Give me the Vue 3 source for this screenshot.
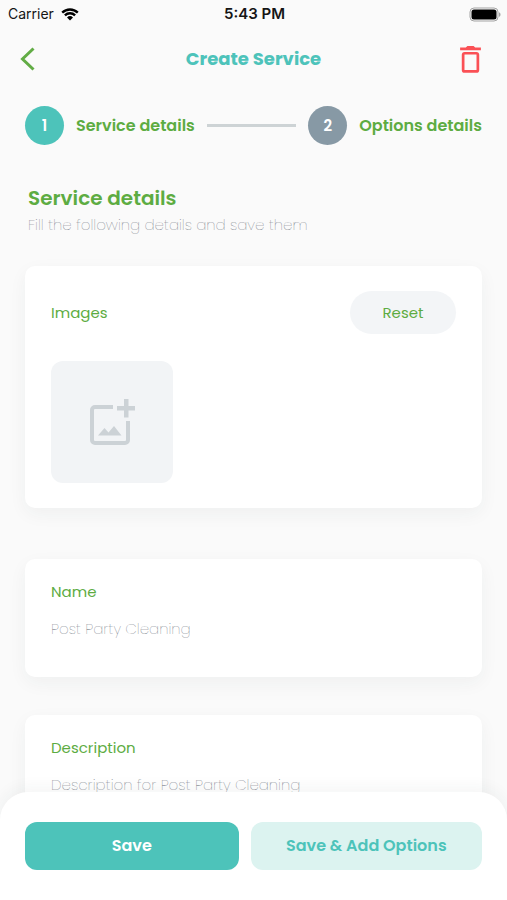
<script setup>
import { ref } from 'vue'

const steps = ['Service details', 'Options details']
const current = ref(0)
const name = ref('Post Party Cleaning')
const description = ref('Description for Post Party Cleaning')
</script>

<template>
  <div class="screen">
    <div class="status">
      <div class="carrier">
        <span>Carrier</span>
        <svg class="wifi" viewBox="0 0 18 13" aria-hidden="true">
          <path d="M1.2 4.6a11.2 11.2 0 0 1 15.6 0" />
          <path d="M3.9 7.4a7.3 7.3 0 0 1 10.2 0" />
          <path class="dot" d="M9 12.6 6 9.5a4.3 4.3 0 0 1 6 0z" />
        </svg>
      </div>
      <span class="time">5:43 PM</span>
      <svg class="battery" viewBox="0 0 32 15" aria-hidden="true">
        <rect class="shell" x="1" y="1" width="28" height="13" rx="4" />
        <rect x="2.5" y="2.5" width="25" height="10" rx="2.5" />
        <path class="tip" d="M30 5.2c2 .8 2 3.8 0 4.6z" />
      </svg>
    </div>

    <header class="topbar">
      <button class="icon-btn" type="button" aria-label="Back">
        <svg class="back" viewBox="0 0 16 24" aria-hidden="true">
          <path d="M13.5 1.5 2.5 12l11 10.5" />
        </svg>
      </button>
      <h1>Create Service</h1>
      <button class="icon-btn end" type="button" aria-label="Delete">
        <svg class="trash" viewBox="0 0 20 26" aria-hidden="true">
          <path class="lid" d="M0 1.4h5.5L7 0h6l1.500 1.400H20V4H0z" />
          <rect x="2.9" y="7" width="14.2" height="17.5" rx="1.5" />
        </svg>
      </button>
    </header>

    <main>
      <ol class="steps">
        <template v-for="(step, i) in steps" :key="step">
          <li v-if="i > 0" class="line" aria-hidden="true"></li>
          <li class="step">
            <span class="num" :class="{ active: i === current }">{{ i + 1 }}</span>
            <span>{{ step }}</span>
          </li>
        </template>
      </ol>

      <section class="intro">
        <h2>Service details</h2>
        <p>Fill the following details and save them</p>
      </section>

      <section class="card images">
        <div class="card-head">
          <h3>Images</h3>
          <button class="reset" type="button">Reset</button>
        </div>
        <button class="tile" type="button" aria-label="Add image">
          <svg viewBox="0 0 46 46" aria-hidden="true">
            <path class="frame" d="M24 8H6a3 3 0 0 0-3 3v30a3 3 0 0 0 3 3h30a3 3 0 0 0 3-3V22" />
            <path d="M9 36.500 15.500 29l4 4.500L25 27l7.500 9.500z" />
            <path d="M35 0h4.500v7H46v4.500h-6.500v7H35v-7h-7V7h7z" />
          </svg>
        </button>
      </section>

      <section class="card field">
        <label for="name">Name</label>
        <input id="name" v-model="name" type="text" />
      </section>

      <section class="card field">
        <label for="description">Description</label>
        <textarea id="description" v-model="description" rows="3"></textarea>
      </section>
    </main>

    <footer>
      <button class="save" type="button">Save</button>
      <button class="save-add" type="button">Save &amp; Add Options</button>
    </footer>
  </div>
</template>

<style>
body {
  margin: 0;
  background: #fafafa;
}
</style>

<style scoped>
.screen {
  height: 100vh;
  display: flex;
  flex-direction: column;
  background: #fafafa;
  color: #5dac42;
  font-family: Poppins, Inter, "Liberation Sans", sans-serif;
  font-size: 15px;
  line-height: 24px;
}
.screen * {
  box-sizing: border-box;
}
button,
input,
textarea {
  font: inherit;
  border: 0;
  padding: 0;
  margin: 0;
  background: none;
}
button {
  cursor: pointer;
}
h1,
h2,
h3,
p,
ol {
  margin: 0;
  padding: 0;
}
.status {
  display: grid;
  grid-template-columns: 1fr auto 1fr;
  align-items: center;
  height: 28px;
  padding: 0 6px 0 8px;
  color: #151515;
  font-family: Inter, sans-serif;
  font-size: 14px;
}
.carrier {
  display: flex;
  align-items: center;
  gap: 7px;
}
.time {
  font-size: 15px;
  font-weight: 600;
}
.wifi {
  width: 18px;
  height: 13px;
  fill: none;
  stroke: #000;
  stroke-width: 2.4;
}
.wifi .dot {
  fill: #000;
  stroke: none;
}
.battery {
  width: 32px;
  height: 15px;
  justify-self: end;
}
.battery .shell {
  fill: none;
  stroke: #a3a3a3;
}
.battery .tip {
  fill: #a3a3a3;
}
.topbar {
  display: grid;
  grid-template-columns: 1fr auto 1fr;
  align-items: center;
  height: 62px;
  padding: 0 20px;
}
h1 {
  color: #4dc3ba;
  font-size: 18px;
  font-weight: 700;
}
.icon-btn {
  display: flex;
  justify-self: start;
}
.icon-btn.end {
  justify-self: end;
  padding: 0 6px;
}
.back {
  width: 16px;
  height: 24px;
  fill: none;
  stroke: #62ac45;
  stroke-width: 3;
}
.trash {
  width: 21px;
  height: 27px;
  fill: none;
  stroke: #fa5055;
  stroke-width: 2.6;
}
.trash .lid {
  fill: #fa5055;
  stroke: none;
}
main {
  flex: 1;
  min-height: 0;
  overflow-y: auto;
  scrollbar-width: none;
  padding: 16px 25px 40px;
}
.steps {
  display: flex;
  align-items: center;
  gap: 12px;
  list-style: none;
  font-size: 16px;
  font-weight: 600;
  white-space: nowrap;
}
.step {
  display: flex;
  align-items: center;
  gap: 12px;
}
.num {
  width: 39px;
  height: 39px;
  border-radius: 50%;
  display: grid;
  place-items: center;
  background: #8799a5;
  color: #fff;
  font-size: 15px;
}
.num.active {
  background: #4dc3ba;
}
.line {
  flex: 1;
  height: 3px;
  background: #cdd3d5;
}
.intro {
  padding: 39px 3px 28px;
}
h2 {
  font-size: 20px;
  line-height: 28px;
  font-weight: 600;
}
.intro p {
  color: #5a6570;
  font-weight: 200;
  line-height: 26px;
}
.card {
  background: #fff;
  border-radius: 10px;
  box-shadow: 0 6px 18px rgba(40, 60, 60, 0.05);
  padding: 25px 26px;
  margin-bottom: 38px;
}
.images {
  margin-bottom: 51px;
}
.card-head {
  display: flex;
  align-items: center;
  justify-content: space-between;
  margin-bottom: 27px;
}
h3 {
  font-size: 15px;
  font-weight: 400;
}
.reset {
  width: 106px;
  height: 43px;
  border-radius: 22px;
  background: #f3f5f7;
  color: #5dac42;
}
.tile {
  display: grid;
  place-items: center;
  width: 122px;
  height: 122px;
  border-radius: 12px;
  background: #f2f4f6;
}
.tile svg {
  width: 46px;
  height: 46px;
  fill: #ccd2d6;
}
.tile .frame {
  fill: none;
  stroke: #ccd2d6;
  stroke-width: 4;
}
.field {
  display: flex;
  flex-direction: column;
  gap: 13px;
  padding-top: 21px;
  padding-bottom: 36px;
}
.field input,
.field textarea {
  display: block;
  width: 100%;
  color: #5a6570;
  font-weight: 200;
  outline: 0;
  resize: none;
}
.field input {
  height: 24px;
}
footer {
  position: relative;
  display: flex;
  gap: 12px;
  margin-top: -28px;
  padding: 30px 25px;
  border-radius: 28px 28px 0 0;
  background: #fff;
  box-shadow: 0 -4px 16px rgba(40, 60, 60, 0.05);
}
footer button {
  height: 48px;
  border-radius: 12px;
  font-size: 16px;
  font-weight: 600;
  white-space: nowrap;
}
.save {
  flex: 12 1 0;
  background: #4dc3ba;
  color: #fff;
}
.save-add {
  flex: 13 1 0;
  background: #dcf3f0;
  color: #4dc3ba;
}
</style>
